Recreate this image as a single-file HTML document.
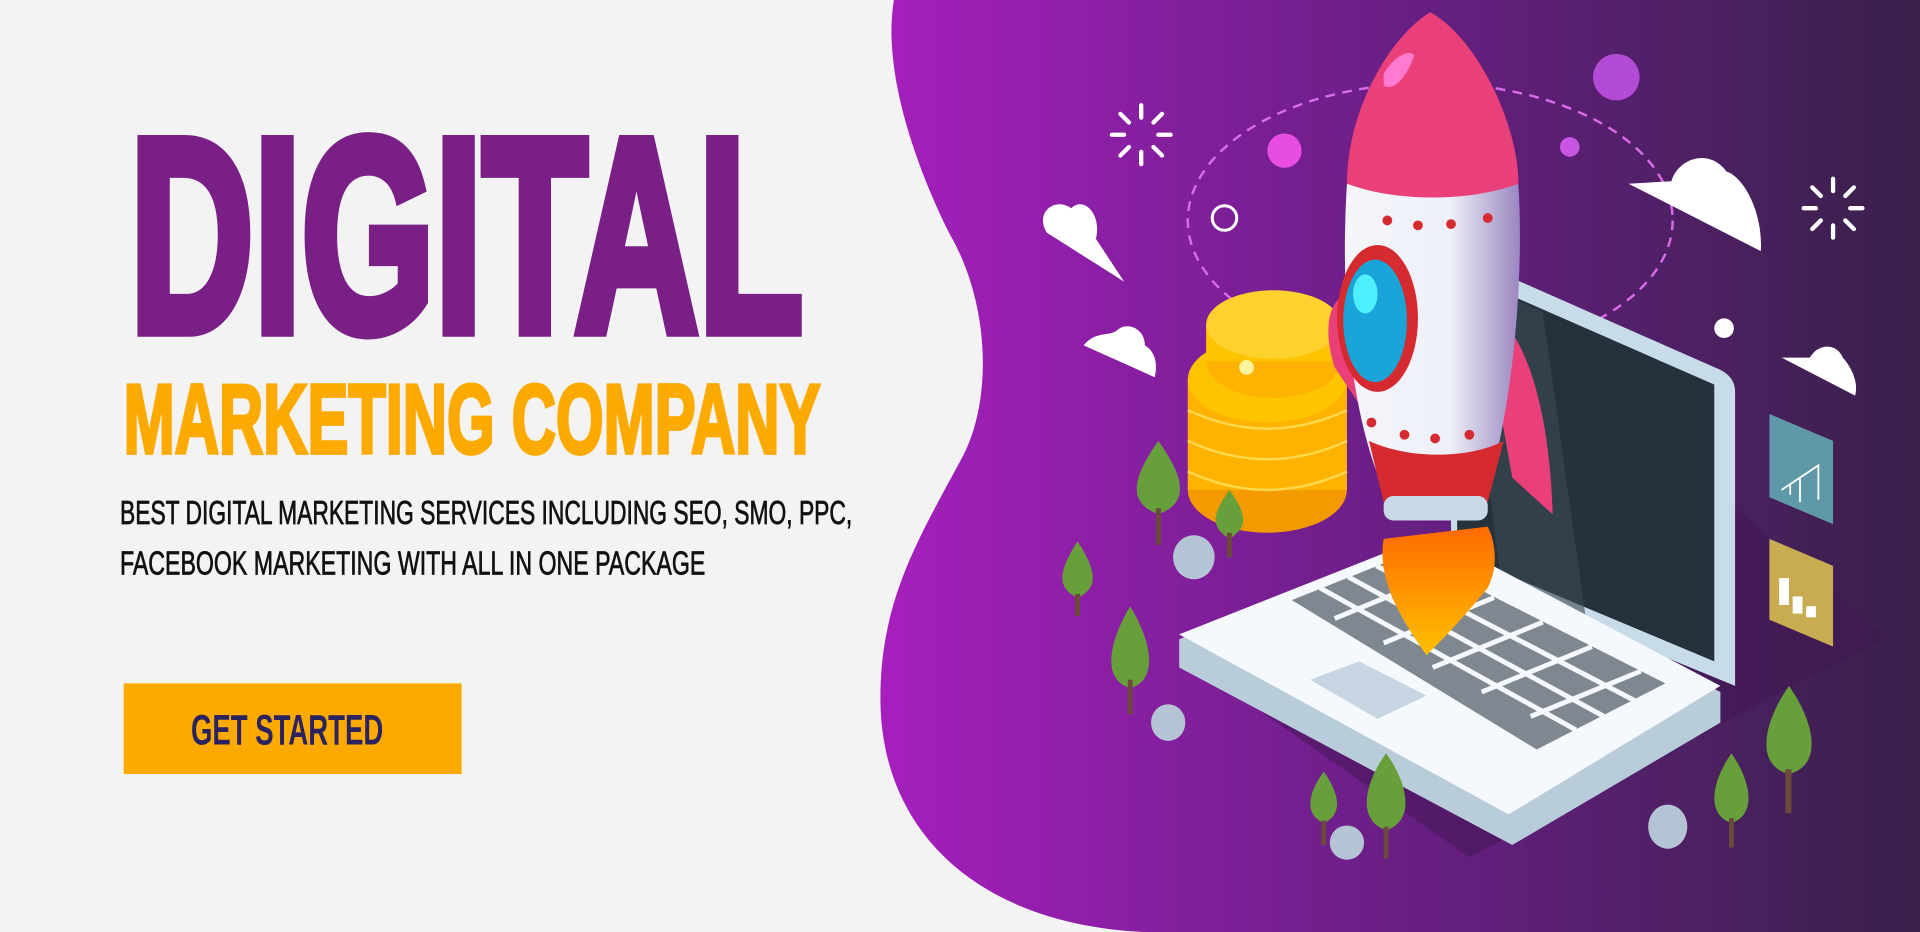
<!DOCTYPE html>
<html><head><meta charset="utf-8"><style>
html,body{margin:0;padding:0;width:1920px;height:932px;overflow:hidden;background:#f3f3f3}
svg{display:block}
</style></head><body>
<svg width="1920" height="932" viewBox="0 0 1568 761" preserveAspectRatio="none" xmlns="http://www.w3.org/2000/svg">
<defs>
<linearGradient id="bg" x1="0" y1="0" x2="1" y2="0">
<stop offset="0" stop-color="#a61fbd"/><stop offset="0.45" stop-color="#6e1f8a"/><stop offset="1" stop-color="#38204a"/>
</linearGradient>
<linearGradient id="body" x1="0" y1="0" x2="1" y2="0"><stop offset="0" stop-color="#f4f6fb"/><stop offset="0.6" stop-color="#eef0f8"/><stop offset="1" stop-color="#9a86c0"/></linearGradient>
<linearGradient id="flame" x1="0" y1="0" x2="0" y2="1"><stop offset="0" stop-color="#ff6a00"/><stop offset="1" stop-color="#ffc000"/></linearGradient>
</defs>
<rect width="1568" height="761" fill="#f3f3f3"/>
<path d="M730 0 C720 60 750 140 775 190 C810 250 810 330 785 375 C750 440 719 490 719 570 C719 680 800 755 935 761 L1568 761 L1568 0 Z" fill="url(#bg)"/>
<path d="M1000 560 L1400 400 L1540 520 L1200 700 Z" fill="#3f1650" opacity="0.5"/>
<ellipse cx="1168" cy="180" rx="198" ry="112" fill="none" stroke="#d96be8" stroke-width="2" stroke-dasharray="8 6"/>
<circle cx="1320" cy="63" r="19" fill="#b44bd6"/>
<circle cx="1049" cy="123" r="14" fill="#e64de0"/>
<circle cx="1282" cy="120" r="8" fill="#c855e2"/>
<circle cx="1000" cy="178" r="10" fill="none" stroke="#fff" stroke-width="2.5"/>
<circle cx="1408" cy="268" r="8" fill="#fff"/>
<g stroke="#fff" stroke-width="3.5" stroke-linecap="round">
<path d="M932 86v10M932 124v10M908 110h10M946 110h10M915 93l7 7M942 120l7 7M949 93l-7 7M922 120l-7 7"/>
<path d="M1497 146v10M1497 184v10M1473 170h10M1511 170h10M1480 153l7 7M1507 180l7 7M1514 153l-7 7M1487 180l-7 7"/>
</g>
<g fill="#fff">
<path d="M918 230 L855 190 C845 175 860 160 875 170 C885 160 900 175 895 195 Z"/>
<path d="M943 308 L885 282 C895 270 905 275 912 270 C920 262 935 268 935 282 C945 288 945 300 943 308 Z"/>
<path d="M1438 205 L1330 150 L1365 148 C1370 130 1395 120 1410 140 C1425 145 1440 175 1438 205 Z"/>
<path d="M1515 323 L1455 292 L1478 292 C1485 280 1500 280 1505 292 C1512 300 1518 312 1515 323 Z"/>
</g>
<path d="M1185 205 L1405 302 Q1417 308 1417 320 L1417 560 L1185 465 Z" fill="#c8dbe8"/>
<path d="M1190 222 L1400 314 L1400 540 L1190 452 Z" fill="#26323b"/>
<path d="M1195 225 L1260 255 L1300 540 L1230 510 Z" fill="#3a4a55" opacity="0.6"/>
<path d="M963 522 L1170 440 L1405 565 L1405 590 L1235 690 L963 545 Z" fill="#b8ccda"/>
<path d="M963 518 L1170 436 L1405 560 L1232 665 Z" fill="#f5f8fc"/>
<path d="M1055 490 L1150 452 L1360 558 L1255 612 Z" fill="#7f8890"/>
<g stroke="#f5f8fc" stroke-width="4">
<path d="M1078 480 L1287 596"/><path d="M1101 471 L1310 585"/><path d="M1124 462 L1335 572"/>
<path d="M1090 505 L1180 468"/><path d="M1130 525 L1220 488"/><path d="M1170 545 L1260 508"/><path d="M1210 565 L1300 528"/><path d="M1250 585 L1340 548"/>
</g>
<path d="M1070 555 L1110 540 L1165 568 L1125 587 Z" fill="#c7d6e2"/>
<g>
<ellipse cx="1035" cy="400" rx="65" ry="35" fill="#f39a00"/>
<rect x="970" y="310" width="130" height="90" fill="#ffb300"/>
<ellipse cx="1035" cy="310" rx="65" ry="35" fill="#ffc400"/>
<ellipse cx="1040" cy="295" rx="55" ry="30" fill="#ffb300"/>
<rect x="985" y="265" width="110" height="30" fill="#ffc400"/>
<ellipse cx="1040" cy="265" rx="55" ry="28" fill="#ffd12e"/>
<circle cx="1018" cy="300" r="6" fill="#fff3a0"/>
<g stroke="#ffd84d" stroke-width="2" fill="none"><path d="M970 335 Q1035 365 1100 335"/><path d="M970 360 Q1035 390 1100 360"/><path d="M970 385 Q1035 415 1100 385"/></g>
</g>
<path d="M1090 300 C1080 270 1085 245 1100 240 L1110 330 Z" fill="#ea4079"/>
<path d="M1210 250 C1240 260 1265 320 1268 420 L1235 390 Z" fill="#ea4079"/>
<path d="M1100 150 C1095 230 1100 330 1130 400 L1215 400 C1235 330 1245 230 1240 150 Z" fill="url(#body)"/>
<path d="M1168 10 C1135 30 1100 90 1100 150 C1140 165 1200 165 1240 150 C1240 100 1205 30 1168 10 Z" fill="#ea4079"/>
<path d="M1130 60 C1140 45 1150 40 1155 45 C1150 60 1140 75 1130 70 Z" fill="#ff7ad0"/>
<path d="M1118 360 C1150 375 1200 375 1228 360 L1215 410 C1180 420 1150 418 1130 410 Z" fill="#d42a30"/>
<rect x="1130" y="405" width="85" height="20" rx="8" fill="#c8d8e4"/>
<g fill="#d42a30"><circle cx="1133" cy="180" r="4"/><circle cx="1158" cy="184" r="4"/><circle cx="1185" cy="183" r="4"/><circle cx="1215" cy="178" r="4"/><circle cx="1120" cy="345" r="4"/><circle cx="1147" cy="355" r="4"/><circle cx="1172" cy="358" r="4"/><circle cx="1200" cy="355" r="4"/></g>
<ellipse cx="1125" cy="260" rx="33" ry="60" fill="#d42a30"/>
<ellipse cx="1123" cy="262" rx="26" ry="50" fill="#1aa4d8"/>
<ellipse cx="1115" cy="240" rx="10" ry="16" fill="#4ef0ff"/>
<path d="M1130 440 C1125 470 1140 500 1165 535 C1180 520 1190 510 1215 480 C1225 460 1220 440 1215 430 Z" fill="url(#flame)"/>
<path d="M1445 338 L1497 360 L1497 428 L1445 406 Z" fill="#5f99a8"/>
<path d="M1455 400 L1485 380 L1485 408 M1462 395 L1462 404 M1470 390 L1470 410" stroke="#fff" stroke-width="1.5" fill="none"/>
<path d="M1445 440 L1497 462 L1497 528 L1445 506 Z" fill="#c9ab52"/>
<g fill="#fff"><rect x="1453" y="472" width="8" height="22"/><rect x="1464" y="487" width="8" height="14"/><rect x="1475" y="495" width="8" height="9"/></g>
<g>
<path d="M946 360 C925 390 920 410 946 420 C972 410 967 390 946 360 Z" fill="#67a03a"/><rect x="944" y="415" width="4" height="30" fill="#6b4a3a"/>
<path d="M1004 400 C990 420 988 430 1004 440 C1020 430 1018 420 1004 400 Z" fill="#67a03a"/><rect x="1002" y="435" width="4" height="20" fill="#6b4a3a"/>
<path d="M880 442 C865 465 862 480 880 488 C898 480 895 465 880 442 Z" fill="#67a03a"/><rect x="878" y="485" width="4" height="18" fill="#6b4a3a"/>
<path d="M923 495 C905 525 900 555 923 562 C946 555 941 525 923 495 Z" fill="#67a03a"/><rect x="921" y="555" width="4" height="28" fill="#6b4a3a"/>
<path d="M1081 630 C1068 648 1065 665 1081 672 C1097 665 1094 648 1081 630 Z" fill="#67a03a"/><rect x="1079" y="670" width="4" height="20" fill="#6b4a3a"/>
<path d="M1132 615 C1114 640 1108 670 1132 678 C1156 670 1150 640 1132 615 Z" fill="#67a03a"/><rect x="1130" y="675" width="4" height="26" fill="#6b4a3a"/>
<path d="M1414 615 C1398 638 1393 665 1414 672 C1435 665 1430 638 1414 615 Z" fill="#67a03a"/><rect x="1412" y="668" width="4" height="24" fill="#6b4a3a"/>
<path d="M1461 560 C1440 590 1433 625 1461 632 C1489 625 1482 590 1461 560 Z" fill="#67a03a"/><rect x="1458" y="628" width="5" height="36" fill="#6b4a3a"/>
</g>
<g fill="#b5c4d4">
<ellipse cx="975" cy="455" rx="17" ry="18"/><ellipse cx="954" cy="590" rx="14" ry="15"/><ellipse cx="1100" cy="688" rx="14" ry="14"/><ellipse cx="1362" cy="675" rx="16" ry="18"/>
</g>
<text x="106" y="270" font-family="Liberation Sans, sans-serif" font-weight="bold" font-size="225" fill="#7a1f86" stroke="#7a1f86" stroke-width="10" stroke-linejoin="miter" textLength="550" lengthAdjust="spacingAndGlyphs">DIGITAL</text>
<text x="101" y="370" font-family="Liberation Sans, sans-serif" font-weight="bold" font-size="80" fill="#fdaa00" stroke="#fdaa00" stroke-width="3" textLength="569" lengthAdjust="spacingAndGlyphs">MARKETING COMPANY</text>
<text x="98" y="428" font-family="Liberation Sans, sans-serif" font-size="27" fill="#111" stroke="#111" stroke-width="0.6" textLength="598" lengthAdjust="spacingAndGlyphs">BEST DIGITAL MARKETING SERVICES INCLUDING SEO, SMO, PPC,</text>
<text x="98" y="469" font-family="Liberation Sans, sans-serif" font-size="27" fill="#111" stroke="#111" stroke-width="0.6" textLength="478" lengthAdjust="spacingAndGlyphs">FACEBOOK MARKETING WITH ALL IN ONE PACKAGE</text>
<rect x="101" y="558" width="276" height="74" fill="#fdaa00"/>
<text x="156" y="608" font-family="Liberation Sans, sans-serif" font-weight="bold" font-size="35" fill="#2a2360" textLength="157" lengthAdjust="spacingAndGlyphs">GET STARTED</text>
</svg>
</body></html>
